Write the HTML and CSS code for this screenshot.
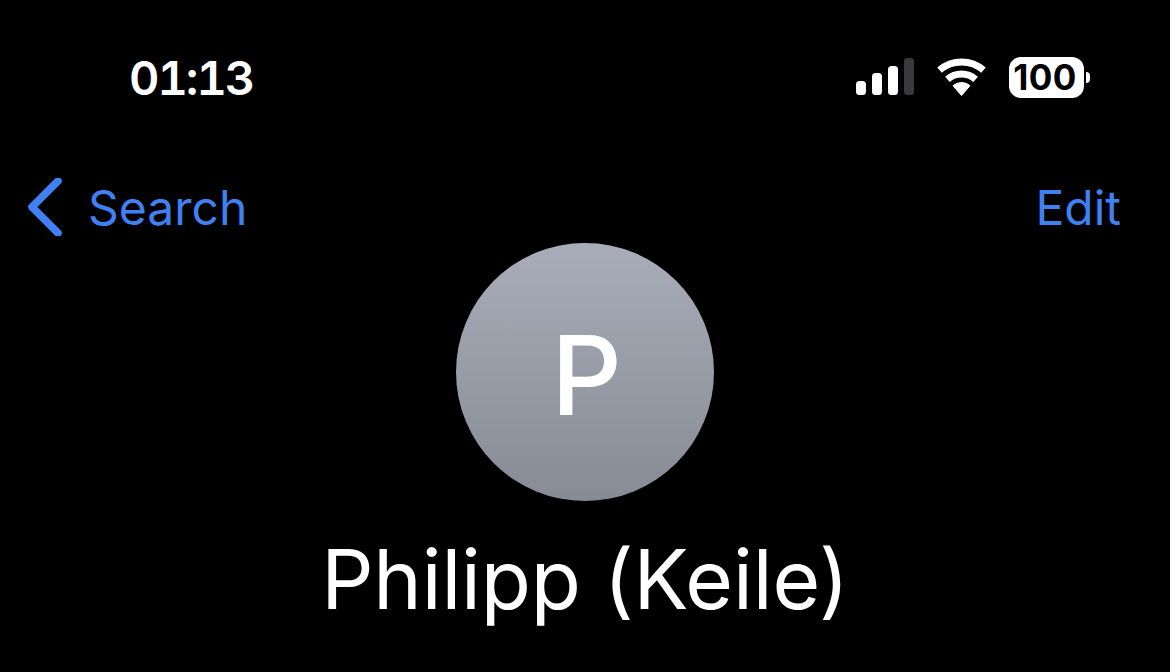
FILE: index.html
```html
<!DOCTYPE html>
<html lang="en">
<head>
    <meta charset="UTF-8">
    <meta name="viewport" content="width=device-width, initial-scale=1.0">
    <title>Contact</title>
    <link rel="stylesheet" href="styles.css">
</head>
<body>
    <div class="status-bar">
        <span class="time">01:13</span>
        <div class="status-icons">
            <svg class="signal" width="58" height="38" viewBox="0 0 58 38">
                <rect x="0" y="23" width="10" height="14" rx="3.5" fill="#fff"/>
                <rect x="16" y="15" width="10" height="22" rx="3.5" fill="#fff"/>
                <rect x="32" y="8" width="10" height="29" rx="3.5" fill="#fff"/>
                <rect x="48" y="0" width="10" height="37" rx="3.5" fill="#3a3a3c"/>
            </svg>
            <svg class="wifi" width="49" height="38" viewBox="0 0 49 38">
                <path d="M2.5 12.2 A33.5 33.5 0 0 1 46.5 12.2" fill="none" stroke="#fff" stroke-width="7"/>
                <path d="M10.4 21.3 A21.5 21.5 0 0 1 38.6 21.3" fill="none" stroke="#fff" stroke-width="7"/>
                <path d="M24.5 37.5 L16 27.7 A13 13 0 0 1 33 27.7 Z" fill="#fff" stroke="#fff" stroke-width="1" stroke-linejoin="round"/>
            </svg>
            <div class="battery">
                <span class="battery-body">100</span>
                <span class="battery-cap"></span>
            </div>
        </div>
    </div>

    <div class="nav-bar">
        <a class="back-link" href="#">
            <svg width="34" height="58" viewBox="0 0 34 58">
                <path d="M30 3 L4 29 L30 55" fill="none" stroke="#3f80f2" stroke-width="7.5" stroke-linecap="round" stroke-linejoin="round"/>
            </svg>
            <span>Search</span>
        </a>
        <a class="edit-link" href="#">Edit</a>
    </div>

    <div class="contact">
        <div class="avatar">P</div>
        <h1 class="name">Philipp (Keile)</h1>
    </div>
</body>
</html>
```

FILE: styles.css
```css
html, body {
    height: 100%;
}
body {
    margin: 0;
    background-color: #000;
    color: #fff;
    font-family: Inter, "Liberation Sans", sans-serif;
    overflow: hidden;
}
.status-bar {
    display: flex;
    justify-content: space-between;
    align-items: center;
    height: 38px;
    padding: 58px 80px 0 129px;
}
.time {
    font-size: 47px;
    font-weight: 600;
    font-variant-numeric: tabular-nums;
    letter-spacing: -2px;
}
.status-icons {
    display: flex;
    align-items: center;
    gap: 23px;
}
.battery {
    display: flex;
    align-items: center;
    gap: 2px;
}
.battery-body {
    display: block;
    box-sizing: border-box;
    width: 75px;
    height: 41px;
    padding-right: 3px;
    line-height: 41px;
    background-color: #fff;
    border-radius: 12px;
    color: #000;
    font-size: 35px;
    font-weight: 700;
    letter-spacing: 0.4px;
    text-align: center;
}
.battery-cap {
    display: block;
    width: 4px;
    height: 11px;
    background-color: #fff;
    border-radius: 0 6px 6px 0;
}
.nav-bar {
    display: flex;
    justify-content: space-between;
    align-items: center;
    height: 58px;
    margin-top: 82px;
    padding: 0 49px 0 28px;
    font-size: 48px;
}
.nav-bar a {
    color: #3f80f2;
    text-decoration: none;
}
.back-link {
    display: flex;
    align-items: center;
    gap: 26px;
}
.contact {
    display: flex;
    flex-direction: column;
    align-items: center;
    margin-top: 7px;
}
.avatar {
    display: flex;
    align-items: center;
    justify-content: center;
    box-sizing: border-box;
    width: 258px;
    height: 258px;
    padding: 5px 0 0 3px;
    border-radius: 50%;
    background: linear-gradient(#a8adb9, #868b95);
    font-size: 110px;
    font-weight: 500;
}
.name {
    margin: 29px 0 0;
    font-size: 82px;
    font-weight: 400;
    line-height: 100px;
    letter-spacing: -0.15px;
}
```
